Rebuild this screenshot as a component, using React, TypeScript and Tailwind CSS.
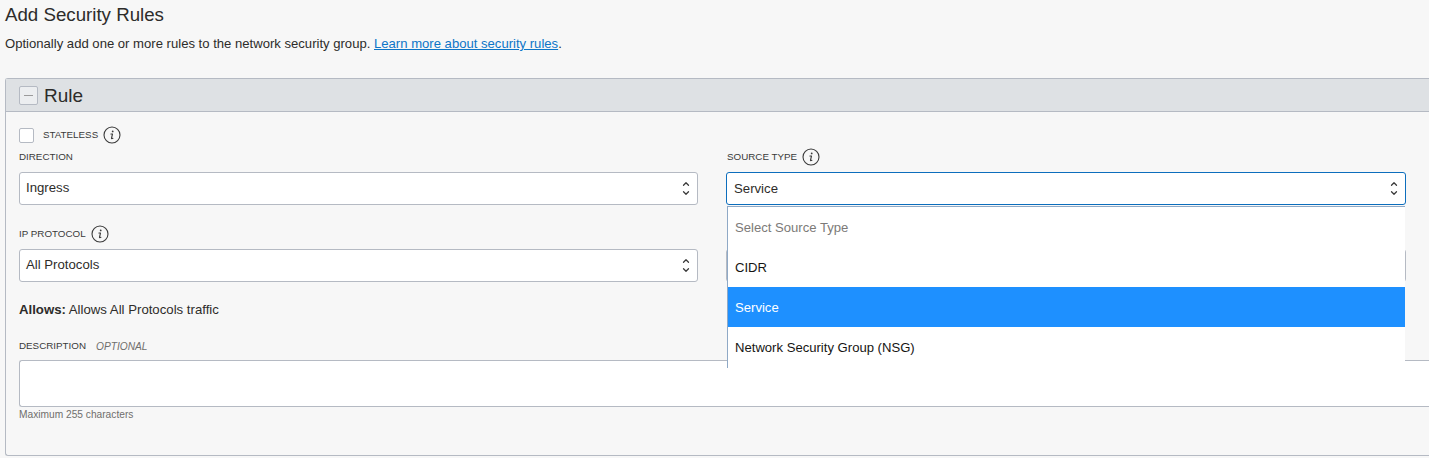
import { ChevronDown, ChevronUp } from 'lucide-react'

function InfoIcon() {
  return (
    <svg width="18" height="18" viewBox="0 0 18 18" fill="none" className="shrink-0">
      <circle cx="9" cy="9" r="8" stroke="#3a3a3a" strokeWidth="1.1" />
      <circle cx="9.7" cy="5.4" r="0.9" fill="#3a3a3a" />
      <path d="M7.9 8h1.6L8.5 12.2c-.1.5.3.7 1.4.1" stroke="#3a3a3a" strokeWidth="1.1" strokeLinecap="round" strokeLinejoin="round" />
    </svg>
  )
}

function SelectBox({ value, focused }: { value: string; focused?: boolean }) {
  return (
    <div
      className={
        'flex h-[33px] items-center justify-between rounded-[3px] border bg-white pr-[6px] text-[13.2px] text-[#2d2c2a] ' +
        (focused ? 'border-[#0d6ebd] pl-[7px]' : 'border-[#b5bac3] pl-[6px]')
      }
    >
      <span className={focused ? '' : 'pb-[2px]'}>{value}</span>
      <span className="flex flex-col items-center text-[#3a3a3a]">
        <ChevronUp size={10} strokeWidth={3} className="-mb-[1px]" />
        <ChevronDown size={10} strokeWidth={3} />
      </span>
    </div>
  )
}

export default function App() {
  return (
    <div className="h-[458px] w-[1429px] overflow-hidden bg-[#f7f7f7] pl-[5px] pt-[5px] font-['Liberation_Sans',Arial,sans-serif] text-[#161513]">
      <h2 className="text-[18.7px] leading-[20px] text-[#2d2c2a]">Add Security Rules</h2>
      <p className="mt-[12px] text-[13.1px] leading-[14px] text-[#2d2c2a]">
        Optionally add one or more rules to the network security group.{' '}
        <a href="#" className="text-[#0d75c7] underline">Learn more about security rules</a>.
      </p>

      <section className="mt-[27px] h-[378px] w-[1440px] rounded-l-[3px] border border-r-0 border-[#b5bac3]">
        <header className="flex h-[33px] items-center gap-[6px] border-b border-[#b5bac3] bg-[#dee1e4] pl-[13px]">
          <span className="flex h-[19px] w-[19px] items-center justify-center rounded-[2px] border border-[#b5bac3] bg-[#eceef0]">
            <span className="h-px w-[9px] bg-[#9b9b9b]" />
          </span>
          <span className="pt-px text-[19px] leading-none text-[#2d2c2a]">Rule</span>
        </header>

        <div className="pl-[13px] pt-[14px]">
          <div className="flex items-center">
            <span className="h-[15px] w-[15px] rounded-[2px] border border-[#b5bac3] bg-white" />
            <span className="ml-[9px] text-[9.8px] leading-none text-[#3a3a3a]">STATELESS</span>
            <span className="ml-[5px]"><InfoIcon /></span>
          </div>

          <div className="relative mt-[3px] grid w-[1387px] grid-cols-[679px_680px] gap-x-[28px]">
            <div>
              <div className="flex h-[20px] items-center text-[9.8px] text-[#3a3a3a]">DIRECTION</div>
              <div className="mt-[5px]"><SelectBox value="Ingress" /></div>

              <div className="mt-[18px] flex h-[22px] items-center gap-[5px] text-[9.8px] text-[#3a3a3a]">
                IP PROTOCOL <InfoIcon />
              </div>
              <div className="mt-[4px]"><SelectBox value="All Protocols" /></div>

              <p className="mt-[21px] text-[13.2px] leading-[14px] text-[#2d2c2a]">
                <b className="font-bold">Allows:</b> Allows All Protocols traffic
              </p>
            </div>

            <div className="relative">
              <div className="flex h-[20px] items-center gap-[5px] pl-px text-[9.8px] text-[#3a3a3a]">
                SOURCE TYPE <InfoIcon />
              </div>
              <div className="mt-[5px]"><SelectBox value="Service" focused /></div>
              <div className="mt-[44px]"><SelectBox value="" /></div>

              {/* open dropdown lies over the next field */}
              <ul className="absolute left-px right-px top-[59px] z-10 h-[162px] overflow-hidden border-l border-t border-[#8fa9c6] bg-white text-[13.1px]">
                <li className="flex h-[40px] items-center pl-[7px] pt-[2px] text-[#7c7a78]">Select Source Type</li>
                <li className="flex h-[40px] items-center pl-[7px] pt-[2px]">CIDR</li>
                <li className="flex h-[40px] items-center bg-[#1e90ff] pl-[7px] pt-[2px] text-white">Service</li>
                <li className="flex h-[40px] items-center pl-[7px] pt-[2px]">Network Security Group (NSG)</li>
              </ul>
            </div>
          </div>

          <div className="mt-[23px] flex h-[14px] items-center gap-[10px] text-[9.8px] text-[#3a3a3a]">
            <span className="mb-[2px]">DESCRIPTION</span>
            <span className="text-[10.2px] italic text-[#6f6e6c]">OPTIONAL</span>
          </div>
          <div className="mt-[6px] h-[47px] w-[1430px] rounded-l-[3px] border border-r-0 border-[#b5bac3] bg-white" />
          <p className="mt-[2px] text-[10.2px] leading-[12px] text-[#6f6e6c]">Maximum 255 characters</p>
        </div>
      </section>
    </div>
  )
}
